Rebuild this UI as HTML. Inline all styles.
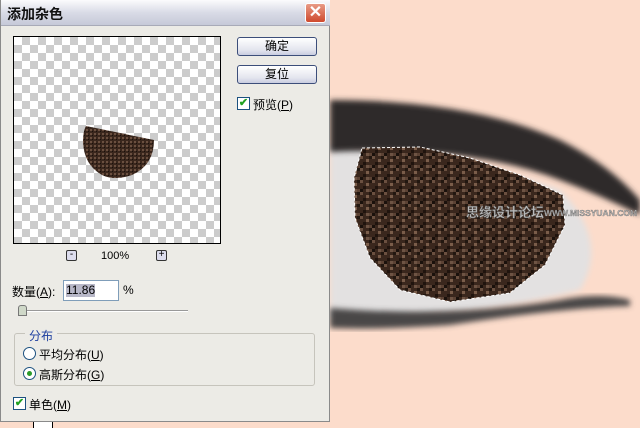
<!DOCTYPE html>
<html><head><meta charset="utf-8"><style>
*{margin:0;padding:0;box-sizing:border-box}
body{width:640px;height:428px;overflow:hidden;background:#fcdccb;position:relative;font-family:"Liberation Sans","Noto Sans CJK SC",sans-serif;font-size:12px;color:#000}
.dlg{position:absolute;left:0;top:0;width:330px;height:422px;background:#ecebe6;border:1px solid #8a8a8a;border-top:none}
.title{position:absolute;left:0;top:0;width:329px;height:26px;background:linear-gradient(#fbfbfd,#d9dbe6 50%,#c6c9d8);border-bottom:1px solid #a8aab8}
.title span{position:absolute;left:6px;top:4px;font-size:14px;font-weight:bold;color:#111}
.close{position:absolute;left:304px;top:3px;width:21px;height:20px;background:linear-gradient(#e89b86,#cf4a2e);border:1px solid #fff;border-radius:3px;color:#fff;font-size:16px;text-align:center;line-height:18px;font-weight:bold}
.prev{position:absolute;left:12px;top:36px;width:208px;height:208px;border:1px solid #000;background-color:#fff;background-image:linear-gradient(45deg,#ccc 25%,transparent 25%,transparent 75%,#ccc 75%),linear-gradient(45deg,#ccc 25%,transparent 25%,transparent 75%,#ccc 75%);background-size:16px 16px;background-position:0 0,8px 8px}
.btn{position:absolute;left:236px;width:80px;height:19px;border:1px solid #3c4e7a;border-radius:3px;background:linear-gradient(#fff,#e3e5ee 70%,#c9cde0);text-align:center;line-height:17px;font-size:12px}
.cb{position:absolute;width:13px;height:13px;border:1px solid #1c5180;background:#fff;color:#21a121;font-size:11px;line-height:11px;text-align:center;font-weight:bold}
.t{position:absolute;font-size:12px;white-space:nowrap}
.rd{position:absolute;width:13px;height:13px;border:1px solid #1c5180;border-radius:50%;background:#fff}
.sb{position:absolute;width:11px;height:11px;border:1px solid #333;border-radius:2px;background:#dde;font-size:10px;line-height:8px;text-align:center}
</style></head><body>
<svg style="position:absolute;left:0;top:0" width="640" height="428">
<defs>
<pattern id="n" width="12" height="12" patternUnits="userSpaceOnUse"><rect width="12" height="12" fill="#3a271d"/><rect width="3" height="3" fill="#6b5040"/><rect x="6" y="3" width="3" height="3" fill="#7a5d4a"/><rect x="3" y="6" width="3" height="3" fill="#20140e"/><rect x="9" y="9" width="3" height="3" fill="#5b4234"/><rect x="0" y="9" width="3" height="3" fill="#1a110c"/><rect x="9" y="0" width="3" height="3" fill="#221710"/><rect x="6" y="9" width="3" height="3" fill="#6e5444"/></pattern>
<filter id="b"><feGaussianBlur stdDeviation="3"/></filter>
</defs>
<path d="M330 145 Q450 150 560 190 Q610 240 580 290 Q460 320 330 318 Z" fill="#e3e1e1" filter="url(#b)"/>
<path d="M330 100 Q470 100 560 140 Q610 165 640 200 L640 215 Q600 195 560 180 Q470 145 330 152 Z" fill="#2f2c2b" filter="url(#b)"/>
<path d="M330 308 Q450 318 560 300 Q600 292 630 300 L630 306 Q560 308 450 325 Q380 330 330 328 Z" fill="#4a4646" filter="url(#b)"/>
<path d="M362 148 L420 147 L470 158 L520 175 L563 195 L565 225 L545 265 L510 293 L450 302 L400 290 L370 258 L355 218 L354 178 Z" fill="url(#n)" stroke="#fff" stroke-dasharray="3 2"/>
<text x="466" y="217" font-size="13" font-weight="bold" fill="#bbb" stroke="#555" stroke-width="0.4" font-family="Liberation Sans,Noto Sans CJK SC,sans-serif">思缘设计论坛</text>
<text x="544" y="216" font-size="8.5" font-weight="bold" fill="#bbb" stroke="#555" stroke-width="0.3" font-family="Liberation Sans,sans-serif">WWW.MISSYUAN.COM</text>
</svg>
<div class="dlg">
<div class="title"><span>添加杂色</span><div class="close">✕</div></div>
<div class="prev"><svg width="206" height="206"><defs><pattern id="n2" width="4" height="4" patternUnits="userSpaceOnUse"><rect width="4" height="4" fill="#3a271d"/><rect width="2" height="2" fill="#6b5040"/><rect x="2" y="2" width="1" height="1" fill="#1a110c"/></pattern></defs><path d="M72 89 L140 103 Q140 128 118 138 Q100 144 88 138 Q70 128 69 105 Q69 94 72 89 Z" fill="url(#n2)"/></svg></div>
<div class="btn" style="top:37px">确定</div>
<div class="btn" style="top:65px">复位</div>
<div class="cb" style="left:236px;top:97px">✔</div><div class="t" style="left:252px;top:96px">预览(<u>P</u>)</div>
<div class="sb" style="left:65px;top:250px">-</div><div class="t" style="left:100px;top:250px;font-size:11px">100%</div><div class="sb" style="left:155px;top:250px">+</div>
<div class="t" style="left:11px;top:283px">数量(<u>A</u>):</div>
<div style="position:absolute;left:62px;top:280px;width:56px;height:21px;border:1px solid #7f9db9;background:#fff"><span style="position:absolute;left:2px;top:3px;background:#b8b8c8;line-height:13px">11.86</span></div>
<div class="t" style="left:122px;top:283px">%</div>
<div style="position:absolute;left:20px;top:310px;width:167px;height:2px;border-top:1px solid #999;border-bottom:1px solid #fff"></div>
<div style="position:absolute;left:17px;top:305px;width:9px;height:11px;background:#cfd8c8;border:1px solid #777;border-radius:3px 3px 0 0"></div>
<div style="position:absolute;left:13px;top:333px;width:301px;height:53px;border:1px solid #c6c4bc;border-radius:3px"></div>
<div class="t" style="left:24px;top:327px;background:#ecebe6;color:#1e3fa0;padding:0 4px">分布</div>
<div class="rd" style="left:22px;top:347px"></div><div class="t" style="left:38px;top:346px">平均分布(<u>U</u>)</div>
<div class="rd" style="left:22px;top:367px"><div style="position:absolute;left:3px;top:3px;width:5px;height:5px;border-radius:50%;background:#2a9a2a"></div></div><div class="t" style="left:38px;top:366px">高斯分布(<u>G</u>)</div>
<div class="cb" style="left:12px;top:397px">✔</div><div class="t" style="left:28px;top:396px">单色(<u>M</u>)</div>
</div>
<div style="position:absolute;left:33px;top:422px;width:20px;height:6px;background:#fff;border-left:1px solid #000;border-right:1px solid #000"></div>
</body></html>
